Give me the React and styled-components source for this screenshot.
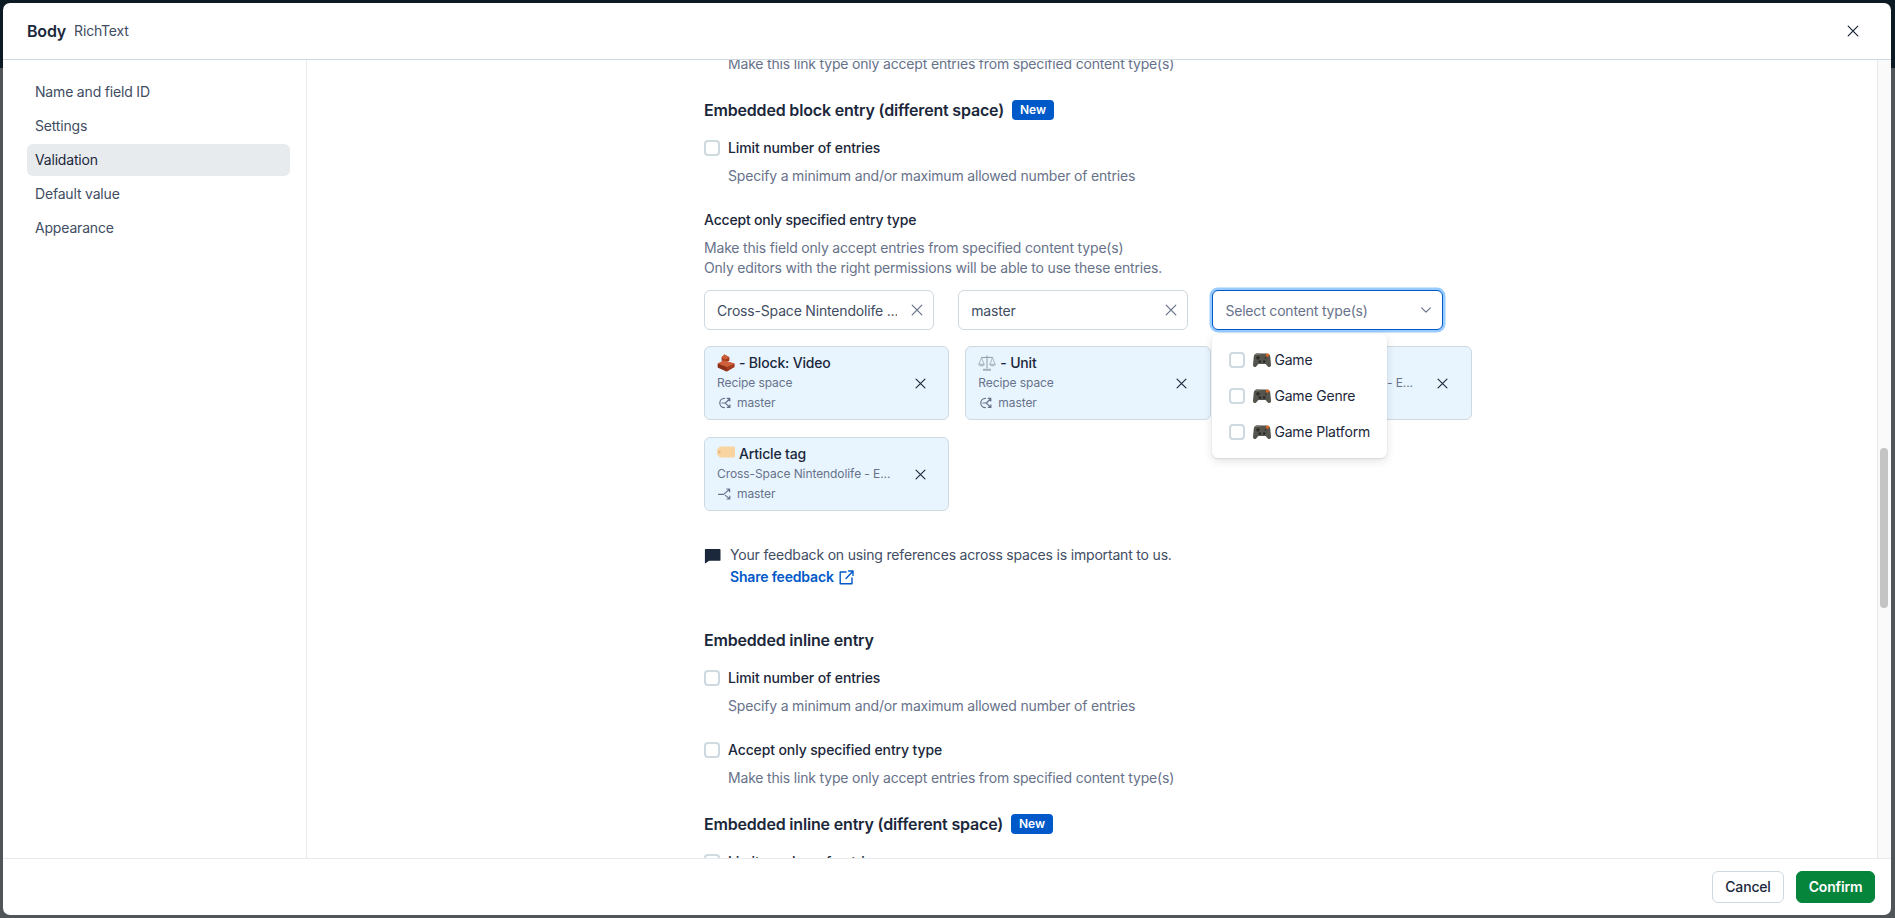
import React from 'react';
import styled, { createGlobalStyle } from 'styled-components';

const color = {
  ink: '#1b273a',
  text: '#414d63',
  muted: '#67728a',
  line: '#cfd9e0',
  lineSoft: '#e7ebee',
  blue: '#0059c8',
  ring: '#98cbff',
  card: '#e8f5ff',
  green: '#05843b',
};

const GlobalStyle = createGlobalStyle`
  html, body {
    margin: 0;
    height: 100%;
  }
  body {
    font-family: Inter, "Noto Sans", "Liberation Sans", sans-serif;
    font-size: 14px;
    line-height: 20px;
    letter-spacing: -0.18px;
    color: ${color.ink};
    -webkit-font-smoothing: antialiased;
  }
  * {
    box-sizing: border-box;
  }
`;

const Page = styled.div`
  height: 100vh;
  padding: 3px 4px 3px 3px;
  background: linear-gradient(#0c1a24 68px, #50555a 68px);
`;

const Modal = styled.div`
  height: 100%;
  display: flex;
  flex-direction: column;
  background: #fff;
  border-radius: 7px;
  overflow: hidden;
`;

const Header = styled.header`
  flex: none;
  height: 57px;
  display: flex;
  align-items: center;
  padding: 0 22px 0 24px;
  border-bottom: 1px solid ${color.line};
`;

const Title = styled.h1`
  margin: 0;
  font-size: 16px;
  line-height: 24px;
  font-weight: 600;
`;

const FieldType = styled.span`
  margin-left: 8px;
  color: ${color.text};
`;

const IconButton = styled.button`
  flex: none;
  width: ${(p) => p.$size || 32}px;
  height: ${(p) => p.$size || 32}px;
  margin-left: ${(p) => (p.$push ? 'auto' : '0')};
  padding: 0;
  display: flex;
  align-items: center;
  justify-content: center;
  border: none;
  background: none;
  color: ${(p) => p.$tone || color.ink};
`;

const Body = styled.div`
  flex: 1;
  min-height: 0;
  display: flex;
`;

const Sidebar = styled.nav`
  flex: none;
  width: 304px;
  padding: 16px 16px 0 24px;
  display: flex;
  flex-direction: column;
  gap: 2px;
  border-right: 1px solid ${color.lineSoft};
`;

const NavItem = styled.div`
  height: 32px;
  padding: 0 8px;
  display: flex;
  align-items: center;
  border-radius: 6px;
  color: ${(p) => (p.$active ? color.ink : color.text)};
  background: ${(p) => (p.$active ? color.lineSoft : 'transparent')};
`;

const Main = styled.main`
  flex: 1;
  min-width: 0;
  overflow: hidden;
`;

const Column = styled.div`
  width: 768px;
  margin: -6px 0 0 397px;
`;

const Track = styled.div`
  flex: none;
  width: 14px;
  padding: 388px 0 0 2px;
  background: #fafafa;
  border-left: 1px solid #e8e8e8;
`;

const Thumb = styled.div`
  width: 8px;
  height: 160px;
  border-radius: 4px;
  background: #c4c4c4;
`;

const Help = styled.p`
  margin: ${(p) => p.$top ?? 8}px 0 0 ${(p) => (p.$indent ? 24 : 0)}px;
  color: ${color.muted};
`;

const SectionHead = styled.h2`
  margin: ${(p) => p.$top ?? 24}px 0 0;
  display: flex;
  align-items: center;
  gap: 8px;
  font-size: 16px;
  line-height: 24px;
  font-weight: 600;
`;

const NewBadge = styled.span`
  width: 42px;
  height: 20px;
  display: flex;
  align-items: center;
  justify-content: center;
  border-radius: 4px;
  background: ${color.blue};
  color: #fff;
  font-size: 12px;
  line-height: 16px;
  font-weight: 600;
  letter-spacing: 0;
`;

const CheckRow = styled.label`
  margin-top: ${(p) => p.$top ?? 16}px;
  display: flex;
  align-items: center;
  gap: 8px;
  font-weight: 500;
  letter-spacing: -0.12px;
`;

const Box = styled.span`
  flex: none;
  width: 16px;
  height: 16px;
  border: 2px solid ${color.line};
  border-radius: 4px;
  background: #fff;
`;

const SubHead = styled.div`
  margin-top: 24px;
  font-weight: 500;
`;

const Pickers = styled.div`
  margin-top: 12px;
  display: flex;
  gap: 24px;
`;

const PickerWrap = styled.div`
  position: relative;
  width: 230.2px;
`;

const Picker = styled.div`
  height: 40px;
  padding: 0 4px 0 12px;
  display: flex;
  align-items: center;
  gap: 8px;
  border: 1px solid ${(p) => (p.$focus ? color.blue : color.line)};
  border-radius: 6px;
  background: #fff;
  color: ${(p) => (p.$focus ? color.muted : color.text)};
  box-shadow: ${(p) => (p.$focus ? `0 0 0 2.5px ${color.ring}` : 'none')};
`;

const PickerValue = styled.span`
  flex: 1;
  min-width: 0;
  padding-top: 1px;
  white-space: nowrap;
  overflow: hidden;
`;

const Menu = styled.div`
  position: absolute;
  z-index: 2;
  top: 44px;
  left: 0;
  width: 174.5px;
  padding: 8px 0 8px 17px;
  border-radius: 6px;
  background: #fff;
  box-shadow: 0 1px 2px rgba(25, 37, 50, 0.1), 0 3px 10px rgba(25, 37, 50, 0.12);
`;

const MenuRow = styled.div`
  height: 36px;
  display: flex;
  align-items: center;
  color: ${color.ink};
  white-space: nowrap;
`;

const MenuEmoji = styled.span`
  display: flex;
  margin: 0 3px 0 8px;
`;

const Cards = styled.div`
  margin-top: 16px;
  display: grid;
  grid-template-columns: repeat(3, minmax(0, 1fr));
  gap: 17px 16px;
`;

const Card = styled.div`
  height: 74px;
  padding: 6px 12px;
  display: flex;
  align-items: center;
  gap: 8px;
  border: 1px solid ${color.line};
  border-radius: 6px;
  background: ${color.card};
`;

const CardInfo = styled.div`
  flex: 1;
  min-width: 0;
`;

const CardTitle = styled.div`
  min-height: 20px;
  display: flex;
  align-items: center;
  gap: 4px;
  font-weight: 500;
  white-space: nowrap;
`;

const CardMeta = styled.div`
  display: flex;
  align-items: center;
  gap: 4px;
  font-size: 12px;
  letter-spacing: -0.08px;
  color: ${color.muted};
`;

const CardSpace = styled(CardMeta)`
  display: block;
  white-space: nowrap;
  overflow: hidden;
`;

const Feedback = styled.div`
  margin-top: 34px;
  display: flex;
  gap: 9px;
  color: ${color.text};
`;

const FeedbackIcon = styled.span`
  flex: none;
  display: flex;
  width: 17px;
  padding-top: 3px;
`;

const ShareLink = styled.a`
  display: flex;
  align-items: center;
  gap: 5px;
  height: 22px;
  margin-top: 1px;
  color: ${color.blue};
  font-weight: 600;
  text-decoration: none;
`;

const Footer = styled.footer`
  flex: none;
  height: 57px;
  padding: 0 16px 0 0;
  display: flex;
  align-items: center;
  justify-content: flex-end;
  gap: 12px;
  border-top: 1px solid ${color.lineSoft};
`;

const Button = styled.button`
  width: ${(p) => (p.$primary ? 79 : 72)}px;
  height: 32px;
  padding: 0;
  border-radius: 6px;
  border: 1px solid ${(p) => (p.$primary ? color.green : color.line)};
  background: ${(p) => (p.$primary ? color.green : '#fff')};
  color: ${(p) => (p.$primary ? '#fff' : color.ink)};
  font: ${(p) => (p.$primary ? 600 : 500)} 14px/20px Inter, sans-serif;
  letter-spacing: -0.17px;
`;

const CloseIcon = ({ size = 14, weight = 1.4 }) => (
  <svg width={size} height={size} viewBox="0 0 16 16" fill="none" stroke="currentColor" strokeWidth={weight} strokeLinecap="round">
    <path d="M2.5 2.5l11 11M13.5 2.5l-11 11" />
  </svg>
);

const ChevronIcon = () => (
  <svg width="14" height="14" viewBox="0 0 16 16" fill="none" stroke="currentColor" strokeWidth="1.3" strokeLinecap="round" strokeLinejoin="round">
    <path d="M3 5.5l5 5 5-5" />
  </svg>
);

const AliasIcon = () => (
  <svg width="16" height="16" viewBox="0 0 16 16" fill="none" stroke={color.muted} strokeWidth="1.2" strokeLinecap="round" strokeLinejoin="round">
    <path d="M7.4 3.4A4.6 4.6 0 0 0 7.4 12.6" />
    <path d="M5 8h3.4l4-4M10.2 3.4h2.6V6M8.8 8.6l4 3.6M12.9 9.8v2.6h-2.6" />
  </svg>
);

const BranchIcon = () => (
  <svg width="16" height="16" viewBox="0 0 16 16" fill="none" stroke={color.muted} strokeWidth="1.2" strokeLinecap="round" strokeLinejoin="round">
    <path d="M1.5 8.4h5.2l5.6-5M9.8 3h2.8v2.8M8.4 9.4l4 3.2M12.8 10.2v2.8H10" />
  </svg>
);

const ChatIcon = () => (
  <svg width="17" height="16" viewBox="0 0 17 16" fill={color.ink}>
    <path d="M1.6 1h14a.9.9 0 0 1 .9.9v10a.9.9 0 0 1-.9.9H5L1.6 15.2a.4.4 0 0 1-.7-.3V1.7c0-.4.3-.7.7-.7z" />
  </svg>
);

const ExternalIcon = () => (
  <svg width="15" height="15" viewBox="0 0 15 15" fill="none" stroke={color.blue} strokeWidth="1.4" strokeLinecap="round" strokeLinejoin="round">
    <path d="M7 2H1.2v11.8H13V8M7 8.4l6.4-6.6M9.6 1H14v4.4" />
  </svg>
);

const BrickEmoji = () => (
  <svg width="18" height="18" viewBox="0 0 18 18">
    <path d="M7.4.6l5 2.6v3.6L8 8.6 4.6 6.6v-3.4z" fill="#a63d20" />
    <path d="M7.4.6l5 2.6L8 5.4 4.6 3.2z" fill="#cf5f38" />
    <path d="M.8 9.4l6-3 10.6 3.2v3.4l-7.6 4.4-9-3.8z" fill="#b4472a" />
    <path d="M.8 9.4l9 3.6v4.4l-9-3.8z" fill="#8a3018" />
    <path d="M9.8 13l7.6-3.4V13l-7.6 4.4z" fill="#a33d22" />
    <path d="M.8 9.4l6-3 10.6 3.2L9.8 13z" fill="#d0603a" />
  </svg>
);

const ScalesEmoji = () => (
  <svg width="18" height="18" viewBox="0 0 18 18" fill="none" stroke="#929ca6" strokeWidth="1">
    <path d="M9 1.5v13M3.5 3.4h11M5 16h8" />
    <path d="M3.5 3.4L1 10.2M3.5 3.4L6 10.2M14.5 3.4L12 10.2M14.5 3.4L17 10.2" strokeWidth="0.7" />
    <path d="M.6 10.2h5.8a3 2.4 0 0 1-5.8 0zM11.6 10.2h5.8a3 2.4 0 0 1-5.8 0z" fill="#c6ccd2" strokeWidth="0.6" />
    <rect x="5" y="14.8" width="8" height="1.6" fill="#a6afb8" stroke="none" />
  </svg>
);

const TagEmoji = () => (
  <svg width="18" height="18" viewBox="0 0 18 18">
    <path d="M3 1.5h14a1 1 0 0 1 1 1v9a1 1 0 0 1-1 1H3L.3 9.8A1 1 0 0 1 0 9V5a1 1 0 0 1 .3-.8z" fill="#f9d3a0" />
    <circle cx="2.4" cy="7" r="0.9" fill="none" stroke="#c89c66" strokeWidth="0.5" />
  </svg>
);

const PadEmoji = () => (
  <svg width="18" height="17" viewBox="0 0 18 17">
    <path d="M4 1.5h10c1.8 0 2.9 1 3.2 3L18 12.6c.2 2-1.8 3.2-3.2 1.8L12.6 12H5.4l-2.2 2.4C1.8 15.8-.2 14.6 0 12.6l.8-8.1c.3-2 1.4-3 3.2-3z" fill="#55554e" />
    <path d="M4 1.5h3.4v1.6H2c.4-1 1-1.6 2-1.6z" fill="#73736b" />
    <rect x="3" y="5" width="4" height="1.5" fill="#2e2e2a" />
    <rect x="4.2" y="3.8" width="1.5" height="4" fill="#2e2e2a" />
    <circle cx="6.8" cy="9.6" r="1.3" fill="#2b2b28" />
    <circle cx="11.2" cy="9.6" r="1.3" fill="#2b2b28" />
    <path d="M12.6 2.2l2.6-.6 1.2 2-2.4 1.6z" fill="#e8641c" />
    <circle cx="12.6" cy="6" r="0.8" fill="#2e2e2a" />
  </svg>
);

const navItems = ['Name and field ID', 'Settings', 'Validation', 'Default value', 'Appearance'];

const cards = [
  { id: 'video', emoji: <BrickEmoji />, title: '- Block: Video', space: 'Recipe space', icon: <AliasIcon /> },
  { id: 'unit', emoji: <ScalesEmoji />, title: '- Unit', space: 'Recipe space', icon: <AliasIcon /> },
  { id: 'hidden', space: 'Cross-Space Nintendolife - E...', icon: <BranchIcon /> },
  { id: 'tag', emoji: <TagEmoji />, title: 'Article tag', space: 'Cross-Space Nintendolife - E...', icon: <BranchIcon /> },
];

const contentTypes = ['Game', 'Game Genre', 'Game Platform'];

const App = () => {
  return (
    <Page>
      <GlobalStyle />
      <Modal>
        <Header>
          <Title>Body</Title>
          <FieldType>RichText</FieldType>
          <IconButton $push type="button" aria-label="Close">
            <CloseIcon />
          </IconButton>
        </Header>
        <Body>
          <Sidebar>
            {navItems.map((item) => (
              <NavItem key={item} $active={item === 'Validation'}>
                {item}
              </NavItem>
            ))}
          </Sidebar>
          <Main>
            <Column>
              <Help $indent $top={0}>Make this link type only accept entries from specified content type(s)</Help>

              <SectionHead>
                Embedded block entry (different space)
                <NewBadge>New</NewBadge>
              </SectionHead>
              <CheckRow>
                <Box />
                Limit number of entries
              </CheckRow>
              <Help $indent>Specify a minimum and/or maximum allowed number of entries</Help>

              <SubHead>Accept only specified entry type</SubHead>
              <Help>
                Make this field only accept entries from specified content type(s)
                <br />
                Only editors with the right permissions will be able to use these entries.
              </Help>

              <Pickers>
                <PickerWrap>
                  <Picker>
                    <PickerValue>Cross-Space Nintendolife ...</PickerValue>
                    <IconButton $size={24} $tone={color.muted} type="button">
                      <CloseIcon />
                    </IconButton>
                  </Picker>
                </PickerWrap>
                <PickerWrap>
                  <Picker>
                    <PickerValue>master</PickerValue>
                    <IconButton $size={24} $tone={color.muted} type="button">
                      <CloseIcon />
                    </IconButton>
                  </Picker>
                </PickerWrap>
                <PickerWrap>
                  <Picker $focus>
                    <PickerValue>Select content type(s)</PickerValue>
                    <IconButton $size={24} $tone={color.muted} type="button">
                      <ChevronIcon />
                    </IconButton>
                  </Picker>
                  <Menu>
                    {contentTypes.map((type) => (
                      <MenuRow key={type}>
                        <Box />
                        <MenuEmoji>
                          <PadEmoji />
                        </MenuEmoji>
                        {type}
                      </MenuRow>
                    ))}
                  </Menu>
                </PickerWrap>
              </Pickers>

              <Cards>
                {cards.map((card) => (
                  <Card key={card.id}>
                    <CardInfo>
                      <CardTitle>
                        {card.emoji}
                        {card.title}
                      </CardTitle>
                      <CardSpace>{card.space}</CardSpace>
                      <CardMeta>
                        {card.icon}
                        master
                      </CardMeta>
                    </CardInfo>
                    <IconButton type="button">
                      <CloseIcon size={13} />
                    </IconButton>
                  </Card>
                ))}
              </Cards>

              <Feedback>
                <FeedbackIcon>
                  <ChatIcon />
                </FeedbackIcon>
                <div>
                  Your feedback on using references across spaces is important to us.
                  <ShareLink href="#feedback">
                    Share feedback
                    <ExternalIcon />
                  </ShareLink>
                </div>
              </Feedback>

              <SectionHead $top={40}>Embedded inline entry</SectionHead>
              <CheckRow>
                <Box />
                Limit number of entries
              </CheckRow>
              <Help $indent>Specify a minimum and/or maximum allowed number of entries</Help>
              <CheckRow $top={24}>
                <Box />
                Accept only specified entry type
              </CheckRow>
              <Help $indent>Make this link type only accept entries from specified content type(s)</Help>

              <SectionHead>
                Embedded inline entry (different space)
                <NewBadge>New</NewBadge>
              </SectionHead>
              <CheckRow>
                <Box />
                Limit number of entries
              </CheckRow>
            </Column>
          </Main>
          <Track>
            <Thumb />
          </Track>
        </Body>
        <Footer>
          <Button type="button">Cancel</Button>
          <Button type="button" $primary>
            Confirm
          </Button>
        </Footer>
      </Modal>
    </Page>
  );
};

export default App;
